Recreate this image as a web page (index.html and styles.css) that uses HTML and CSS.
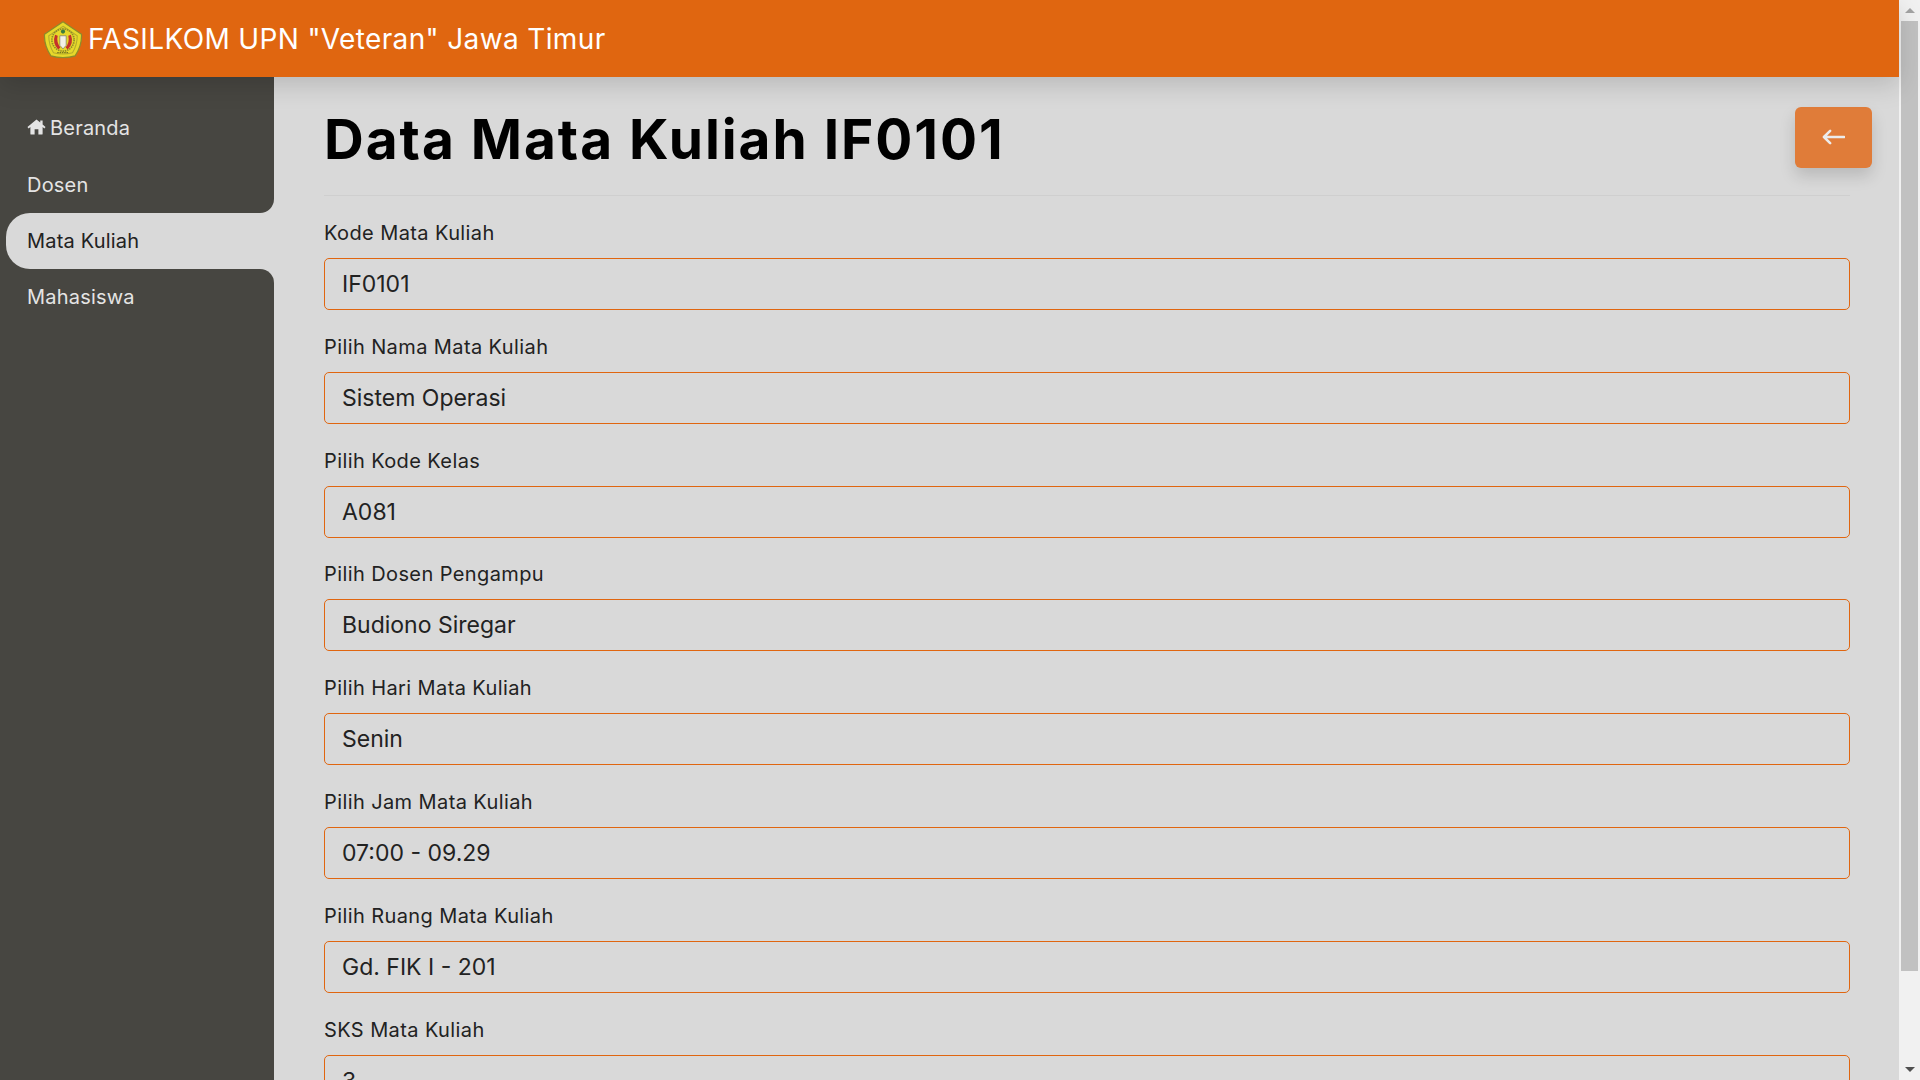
FILE: index.html
```html
<!DOCTYPE html>
<html lang="en">

<head>
    <meta charset="UTF-8">
    <meta name="viewport" content="width=device-width, initial-scale=1.0">
    <title>Data Mata Kuliah</title>
    <link rel="stylesheet" href="styles.css">
</head>

<body>
    <div class="app">
        <header class="topbar">
            <svg class="logo" viewBox="0 0 37 36">
                <path d="M18.5 .8 L36 12.5 C36.5 20 34 27 30 33 Q18.5 36.5 7 33 C3 27 .5 20 1 12.5 Z" fill="#e6d82a" stroke="#8d8b2a" stroke-width="1.2" stroke-linejoin="round" />
                <path d="M18.5 5 L32 14 C32 20 30 26 27.5 30 Q18.5 32.5 9.5 30 C7 26 5 20 5 14 Z" fill="none" stroke="#b4ab2c" stroke-width="1" />
                <circle cx="18.5" cy="18" r="10.5" fill="none" stroke="#8f8a2a" stroke-width="1.6" stroke-dasharray="1.4 .8" />
                <path d="M11 13 Q8 21 14 27 L16 25 Q12 20 13.5 14 Z" fill="#c4312a" />
                <path d="M26 13 Q29 21 23 27 L21 25 Q25 20 23.5 14 Z" fill="#c4312a" />
                <circle cx="18.5" cy="10" r="2" fill="#3d7c3c" />
                <path d="M15.5 14 h6 v9 l-3 3.5 l-3 -3.5 Z" fill="#f3f0e6" stroke="#6f6f60" stroke-width=".6" />
                <path d="M13 30 H24" stroke="#77751f" stroke-width="1.2" stroke-dasharray="1.5 .7" />
            </svg>
            <span class="brand">FASILKOM UPN "Veteran" Jawa Timur</span>
        </header>

        <div class="layout">
            <nav class="sidebar">
                <a class="nav-link" href="#">
                    <svg class="icon-home" viewBox="0 0 20 17">
                        <path d="M10 .5 L.4 8.4 L1.6 10 L3.5 8.6 V15.6 Q3.5 16.5 4.4 16.5 H8 V11 H12 V16.5 H15.6 Q16.5 16.5 16.5 15.6 V8.6 L18.4 10 L19.6 8.4 L16.5 5.8 V1.5 H14 V3.8 Z" />
                    </svg>
                    Beranda
                </a>
                <div class="nav-corner">
                    <a class="nav-link before-active" href="#">Dosen</a>
                </div>
                <a class="nav-link active" href="#">Mata Kuliah</a>
                <div class="nav-corner">
                    <a class="nav-link after-active" href="#">Mahasiswa</a>
                </div>
            </nav>

            <main class="content">
                <div class="page-head">
                    <h1>Data Mata Kuliah IF0101</h1>
                    <a class="btn-back" href="#">
                        <svg viewBox="0 0 24 16">
                            <path d="M23 8 H2 M8.5 1.5 L2 8 L8.5 14.5" fill="none" stroke="currentColor" stroke-width="2.6" stroke-linecap="round" stroke-linejoin="round" />
                        </svg>
                    </a>
                </div>
                <hr class="divider">

                <form class="form">
                    <div class="field">
                        <label>Kode Mata Kuliah</label>
                        <input class="control" type="text" value="IF0101">
                    </div>
                    <div class="field">
                        <label>Pilih Nama Mata Kuliah</label>
                        <input class="control" type="text" value="Sistem Operasi">
                    </div>
                    <div class="field">
                        <label>Pilih Kode Kelas</label>
                        <input class="control" type="text" value="A081">
                    </div>
                    <div class="field">
                        <label>Pilih Dosen Pengampu</label>
                        <input class="control" type="text" value="Budiono Siregar">
                    </div>
                    <div class="field">
                        <label>Pilih Hari Mata Kuliah</label>
                        <input class="control" type="text" value="Senin">
                    </div>
                    <div class="field">
                        <label>Pilih Jam Mata Kuliah</label>
                        <input class="control" type="text" value="07:00 - 09.29">
                    </div>
                    <div class="field">
                        <label>Pilih Ruang Mata Kuliah</label>
                        <input class="control" type="text" value="Gd. FIK I - 201">
                    </div>
                    <div class="field">
                        <label>SKS Mata Kuliah</label>
                        <input class="control" type="text" value="3">
                    </div>
                </form>
            </main>
        </div>
    </div>

    <div class="scrollbar">
        <div class="scroll-btn"><span class="arrow-up"></span></div>
        <div class="scroll-track">
            <div class="scroll-thumb"></div>
        </div>
        <div class="scroll-btn"><span class="arrow-down"></span></div>
    </div>
</body>

</html>
```

FILE: styles.css
```css
* {
    box-sizing: border-box;
}

html,
body {
    height: 100%;
}

body {
    margin: 0;
    display: flex;
    height: 1080px;
    overflow: hidden;
    background-color: #d9d9d9;
    font-family: "Inter", "Liberation Sans", sans-serif;
}

.app {
    flex: 1;
    min-width: 0;
    display: flex;
    flex-direction: column;
}

.topbar {
    height: 77px;
    flex-shrink: 0;
    display: flex;
    align-items: center;
    padding-left: 43px;
    background-color: #e06610;
    box-shadow: 0 8px 24px rgba(0, 0, 0, 0.15);
    position: relative;
    z-index: 2;
}

.logo {
    width: 40px;
    height: 38px;
    margin: 2px 5px 0 0;
}

.brand {
    color: #fff;
    font-size: 28px;
    letter-spacing: 0.36px;
    white-space: nowrap;
}

.layout {
    flex: 1;
    min-height: 0;
    display: flex;
}

.sidebar {
    width: 274px;
    flex-shrink: 0;
    padding-top: 23px;
    background-color: #474641;
}

.nav-link {
    display: flex;
    align-items: center;
    height: 56.4px;
    padding-left: 27px;
    color: #e4e4e4;
    font-size: 20px;
    letter-spacing: 0.2px;
    text-decoration: none;
    background-color: #474641;
}

.icon-home {
    width: 19px;
    height: 16px;
    margin: 0 4px 2px 0;
    fill: #e4e4e4;
}

.nav-corner {
    background: linear-gradient(to right, #474641 50%, #d9d9d9 50%);
}

.before-active {
    border-bottom-right-radius: 14px;
}

.after-active {
    border-top-right-radius: 14px;
}

.nav-link.active {
    margin-left: 6px;
    padding-left: 21px;
    color: #222;
    background-color: #d9d9d9;
    border-radius: 24px 0 0 24px;
}

.content {
    flex: 1;
    min-width: 0;
    padding: 30px 49px 0 50px;
}

.page-head {
    display: flex;
    justify-content: space-between;
    align-items: flex-start;
    height: 88px;
    margin-right: -22px;
}

h1 {
    margin: -1px 0 0;
    font-size: 55px;
    font-weight: 700;
    line-height: 66px;
    letter-spacing: 1.95px;
    color: #000;
}

.btn-back {
    width: 77px;
    height: 61px;
    display: flex;
    align-items: center;
    justify-content: center;
    color: #ececec;
    background-color: #e07c39;
    border-radius: 6px;
    box-shadow: 0 8px 16px rgba(0, 0, 0, 0.15);
}

.btn-back svg {
    width: 23px;
    height: 16px;
    margin-top: -1px;
}

.divider {
    margin: 0;
    border: none;
    border-top: 1px solid #cfcfcf;
}

.form {
    padding-top: 25px;
}

.field {
    margin-bottom: 24.8px;
}

label {
    display: block;
    height: 24px;
    margin-bottom: 13px;
    font-size: 20px;
    line-height: 24px;
    letter-spacing: 0.4px;
    color: #222;
}

.control {
    display: block;
    width: 100%;
    height: 52px;
    padding: 0 17px;
    border: 1px solid #e06610;
    border-radius: 5px;
    background-color: transparent;
    color: #222;
    font-family: inherit;
    font-size: 23px;
    outline: none;
}

.scrollbar {
    width: 21px;
    flex-shrink: 0;
    display: flex;
    flex-direction: column;
    background-color: #f1f1f1;
}

.scroll-btn {
    height: 21px;
    display: flex;
    align-items: center;
    justify-content: center;
}

.arrow-up {
    border-left: 5px solid transparent;
    border-right: 5px solid transparent;
    border-bottom: 5px solid #a3a3a3;
}

.arrow-down {
    border-left: 5px solid transparent;
    border-right: 5px solid transparent;
    border-top: 5px solid #505050;
}

.scroll-track {
    flex: 1;
    padding: 0 2px;
}

.scroll-thumb {
    height: 950px;
    background-color: #c1c1c1;
}
```
